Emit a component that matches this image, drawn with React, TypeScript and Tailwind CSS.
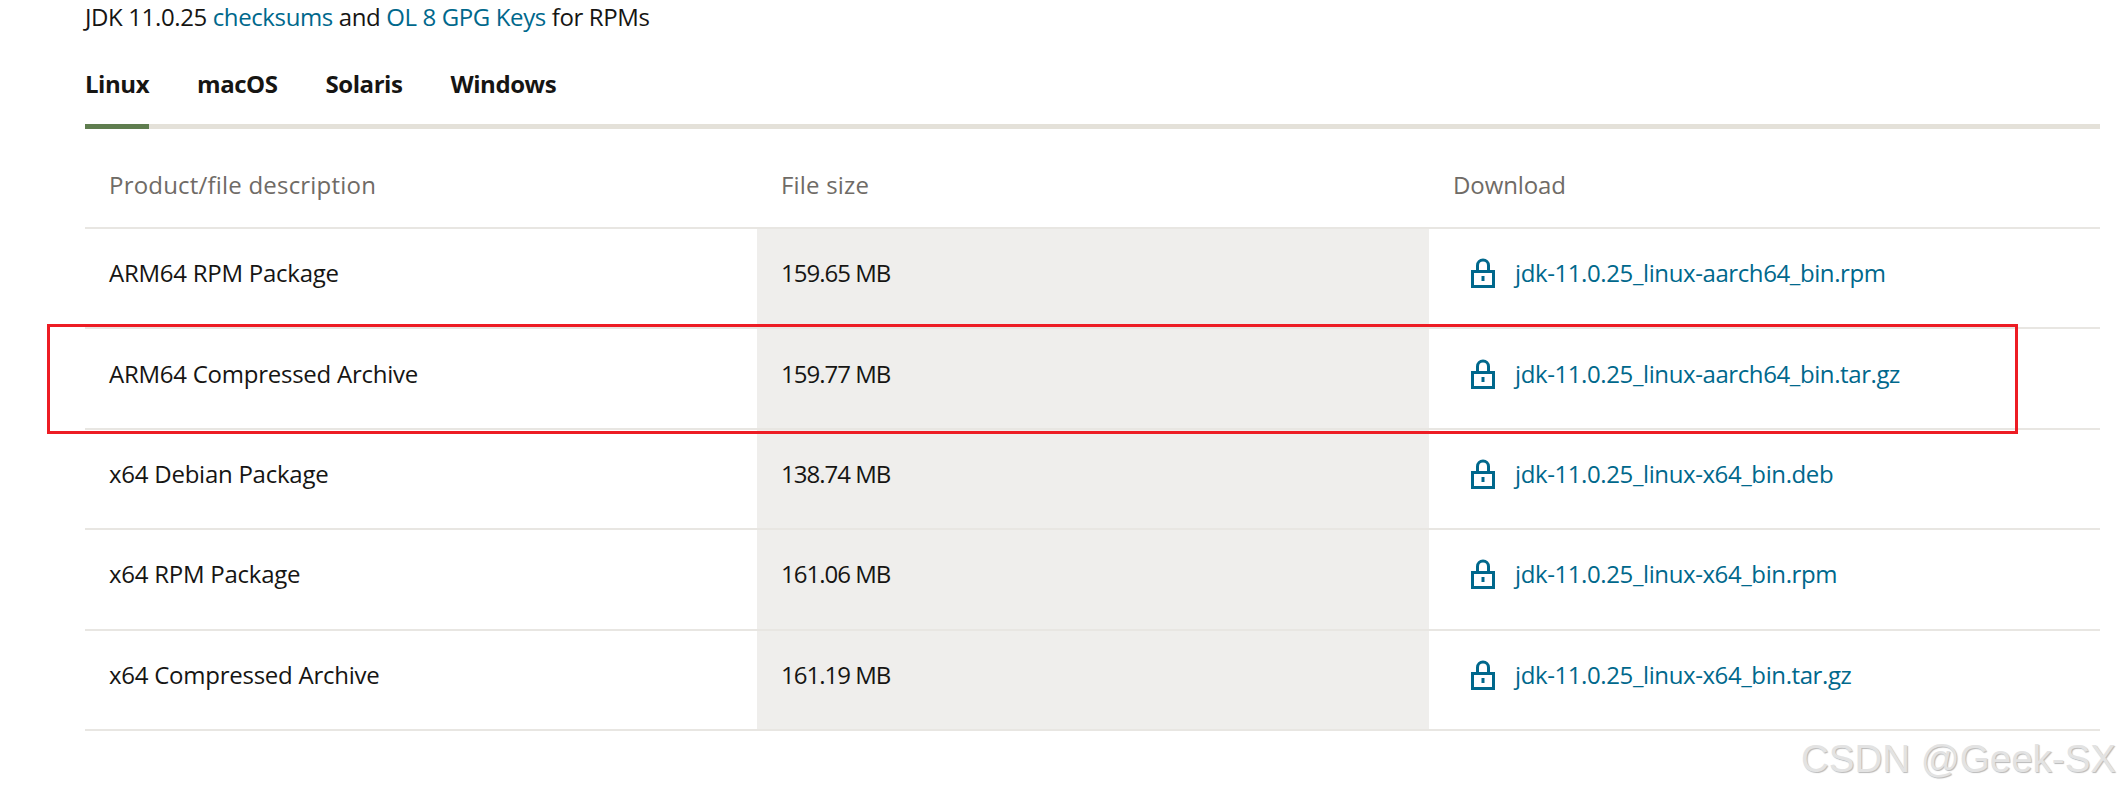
const rows = [
  { name: "ARM64 RPM Package", size: "159.65 MB", file: "jdk-11.0.25_linux-aarch64_bin.rpm" },
  { name: "ARM64 Compressed Archive", size: "159.77 MB", file: "jdk-11.0.25_linux-aarch64_bin.tar.gz" },
  { name: "x64 Debian Package", size: "138.74 MB", file: "jdk-11.0.25_linux-x64_bin.deb" },
  { name: "x64 RPM Package", size: "161.06 MB", file: "jdk-11.0.25_linux-x64_bin.rpm" },
  { name: "x64 Compressed Archive", size: "161.19 MB", file: "jdk-11.0.25_linux-x64_bin.tar.gz" },
];

function LockIcon() {
  return (
    <svg aria-hidden="true" viewBox="0 0 24 30" className="h-[30px] w-6 shrink-0" fill="none" stroke="#00688c">
      <path d="M6.5 13V7.5a5.5 5.5 0 0 1 11 0V13" strokeWidth="3" />
      <rect x="1.5" y="13.5" width="21" height="15" strokeWidth="3" />
      <path d="M12 18v5" strokeWidth="3" />
    </svg>
  );
}

export default function App() {
  return (
    <div className="relative h-[796px] w-[2118px] overflow-hidden bg-white pl-[85px] pr-[18px] font-['Open_Sans',sans-serif] text-[24px] tracking-[-0.25px] text-[#161513]">
      <p className="flex h-[34px] items-center tracking-[-0.38px]">
        <span>
          JDK 11.0.25 <a className="text-[#00688c]">checksums</a> and <a className="text-[#00688c]">OL 8 GPG Keys</a> for RPMs
        </span>
      </p>

      {/* Tabs */}
      <div className="mt-[16px] border-b-[5px] border-[#e4e1d9]">
        <div className="flex gap-[48px] font-bold tracking-[-0.45px]">
          <div className="relative flex h-[74px] items-start pt-[17px] leading-[34px]">
            Linux
            <div className="absolute inset-x-0 bottom-[-5px] h-[5px] bg-[#5f7d4f]" />
          </div>
          <div className="pt-[17px] leading-[34px]">macOS</div>
          <div className="pt-[17px] leading-[34px]">Solaris</div>
          <div className="pt-[17px] leading-[34px]">Windows</div>
        </div>
      </div>

      {/* Table */}
      <div className="grid h-[100px] grid-cols-[672px_672px_1fr] items-center border-b-2 border-[#e8e6e2] pt-[13px] font-medium tracking-[0.2px] text-[#6f6b66]">
        <div className="pl-6">Product/file description</div>
        <div className="pl-6">File size</div>
        <div className="pl-6 tracking-[-0.1px]">Download</div>
      </div>
      {rows.map((row) => (
        <div key={row.file} className="grid h-[100.4px] grid-cols-[672px_672px_1fr] border-b-2 border-[#e8e6e2]">
          <div className="flex items-center pb-[10px] pl-6">{row.name}</div>
          <div className="flex items-center bg-[#efeeec] pb-[10px] pl-6 tracking-[-1px]">{row.size}</div>
          <div className="flex items-center gap-5 pb-[10px] pl-[42px] tracking-[-0.4px] text-[#00688c]">
            <LockIcon />
            <a>{row.file}</a>
          </div>
        </div>
      ))}

      {/* Red annotation box drawn over the screenshot */}
      <div className="absolute left-[47px] top-[324px] h-[110px] w-[1971px] border-[3px] border-[#ed1c24]" />

      {/* Watermark */}
      <div className="absolute bottom-[15px] right-[2px] whitespace-nowrap font-['Liberation_Sans',sans-serif] text-[38.5px] leading-[44px] tracking-normal text-[#e3e3e3] [text-shadow:1px_1px_1px_#b8b8b8]">
        CSDN @Geek-SX
      </div>
    </div>
  );
}
